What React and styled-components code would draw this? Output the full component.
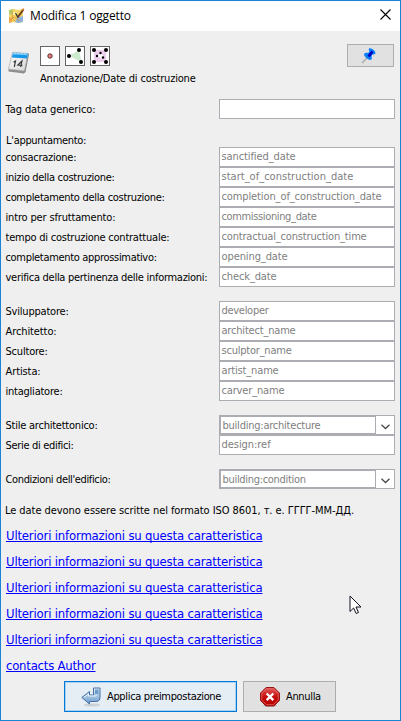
import React from 'react';
import styled, { createGlobalStyle, css } from 'styled-components';

const Global = createGlobalStyle`
  html, body { margin: 0; padding: 0; overflow: hidden; }
  *, *::before, *::after { box-sizing: border-box; }
`;

const controlFont = css`
  font-family: "DejaVu Sans Condensed", "Liberation Sans", sans-serif;
  font-size: 11px;
`;

const Dialog = styled.div`
  ${controlFont}
  position: relative;
  display: flex;
  flex-direction: column;
  width: 401px;
  height: 721px;
  border: 1px solid #1883d7;
  background: #efefef;
  color: #000;
  white-space: nowrap;
`;

const TitleBar = styled.header`
  display: flex;
  align-items: center;
  height: 30px;
  flex: none;
  padding: 0 9px 0 7px;
  background: #fff;
`;

const Title = styled.h1`
  flex: 1;
  margin: 0 0 0 5px;
  font: 400 12px/16px "Open Sans", "Noto Sans", sans-serif;
  letter-spacing: -0.16px;
`;

const CloseButton = styled.button`
  display: flex;
  padding: 0;
  margin-bottom: 3px;
  border: 0;
  background: none;
`;

const Toolbar = styled.div`
  display: flex;
  height: 68px;
  flex: none;
  padding: 13px 6px 0 7px;
`;

const PresetIcon = styled.div`
  display: flex;
  width: 32px;
  padding-top: 6px;
`;

const PresetInfo = styled.div`
  flex: 1;
`;

const TypeIcons = styled.div`
  display: flex;
  gap: 5px;
  padding-top: 2px;
  margin-bottom: 4px;

  svg { display: block; }
`;

const Caption = styled.div`
  line-height: 18px;
  letter-spacing: -0.18px;
`;

const PinButton = styled.button`
  display: flex;
  align-items: flex-start;
  justify-content: center;
  width: 47px;
  height: 23px;
  padding: 2px 3px 0 0;
  border: 1px solid #adadad;
  background: #e1e1e1;
`;

const Group = styled.section`
  display: flex;
  flex-direction: column;
  margin-bottom: ${(p) => p.$after}px;
`;

const Heading = styled.div`
  height: 14px;
  padding-left: 5px;
  line-height: 16px;
  letter-spacing: -0.3px;
`;

const Row = styled.div`
  display: grid;
  grid-template-columns: 213.500px 176px;
  grid-template-rows: 20px;
  height: 20px;
  padding-left: 4.500px;
`;

const Label = styled.label`
  line-height: 22px;
  letter-spacing: ${(p) => p.$track}px;
`;

const TextField = styled.div`
  height: 20px;
  padding-left: 1.500px;
  border: 1px solid #abadb3;
  background: #fff;
  color: #808080;
  line-height: 18px;
  letter-spacing: ${(p) => p.$track}px;
`;

const Combo = styled.div`
  display: flex;
  height: 20px;
  border: 1px solid #abadb3;
  background: #fff;
`;

const ComboText = styled.div`
  width: 156px;
  padding-left: 1.500px;
  border: 1px solid #abadb3;
  color: #808080;
  line-height: 17px;
  letter-spacing: ${(p) => p.$track}px;
`;

const ComboArrow = styled.div`
  display: flex;
  flex: 1;
  align-items: center;
  justify-content: center;
  padding-top: 4px;
`;

const Note = styled.p`
  height: 16px;
  margin: 0 0 4px;
  padding-left: 4px;
  line-height: 18px;
  letter-spacing: -0.06px;
`;

const Links = styled.nav`
  display: flex;
  flex-direction: column;
  align-items: flex-start;
  padding-left: 5px;
`;

const Link = styled.a`
  height: 26px;
  color: #0000ff;
  font-size: 13px;
  line-height: 28px;
  letter-spacing: ${(p) => p.$track}px;
  text-decoration: underline;
  text-decoration-thickness: 1px;
  text-underline-offset: 1px;
  text-decoration-skip-ink: none;
`;

const Actions = styled.footer`
  display: flex;
  gap: 6px;
  margin-top: auto;
  padding: 0 0 8px 63px;
`;

const ActionButton = styled.button`
  ${controlFont}
  display: flex;
  align-items: center;
  width: ${(p) => p.$width}px;
  height: 31px;
  padding: 0 0 0 16px;
  gap: 6px;
  border: 1px solid #adadad;
  background: #e1e1e1;
  color: #000;
  letter-spacing: -0.34px;
  white-space: nowrap;
  ${(p) => p.$primary && css`
    border-color: #0078d7;
    background: #e5edf5;
    box-shadow: inset 0 0 0 1px #a9d1f2;
  `}
`;

const Pointer = styled.svg`
  position: absolute;
  left: 348px;
  top: 594px;
`;

const AppIcon = () => (
  <svg width="17" height="17" viewBox="0 0 17 17">
    <path d="M1 2L6 1l4 1 5-1v13l-5 1-4-1-5 1z" fill="#f3d465" />
    <path d="M1 2l4-1 0 4-2 2-2-1z" fill="#b5cf6a" />
    <path d="M9 10l6-2v6l-5 1-3-1z" fill="#8fb3dc" />
    <path d="M1 9l3 2v3l-3 1z" fill="#f0a848" />
    <path d="M3 3l2 3-1 4 3 3M2 12l4-3 6 4" fill="none" stroke="#dd8b36" strokeWidth=".8" />
    <path d="M5 4h4v3H5z" fill="#fff09a" />
    <path d="M15.500 1.500L9.500 9.500" stroke="#6b3a20" strokeWidth="1.800" />
    <path d="M7.500 5l2.500 4.500" stroke="#333" strokeWidth="1.300" />
    <path d="M14 2l2-1" stroke="#e07a2c" strokeWidth="1.500" />
  </svg>
);

const CloseIcon = () => (
  <svg width="11" height="11" viewBox="0 0 11 11">
    <path d="M.5.5l10 10M10.500.5l-10 10" stroke="#000" strokeWidth="1.100" />
  </svg>
);

const CalendarIcon = () => (
  <svg width="22" height="24" viewBox="0 0 22 24">
    <defs>
      <linearGradient id="page" x1="0" y1="0" x2="1" y2="1">
        <stop offset="0" stopColor="#fff" />
        <stop offset="1" stopColor="#d4d4d4" />
      </linearGradient>
    </defs>
    <path d="M19 3l2 1-3.500 18-2 1.500z" fill="#777" />
    <path d="M.5 19l16 1-.5 3.500L.5 21.500z" fill="#8d8d8d" />
    <path d="M4.500 2.500L20 3.500 16.500 21 .5 19z" fill="url(#page)" stroke="#aaa" strokeWidth=".7" />
    <path d="M5 2.500l15 .7-1 5.300L3.900 7.500z" fill="#1597e8" />
    <path d="M5 2.500l15 .7-.4 2L4.500 4.500z" fill="#70c6f6" />
    <path d="M7 1v3M10 1v3M13.500 1.300v3M17 1.500v3" stroke="#ddd" />
    <path d="M5.500 12l2-1-1.200 6M12.700 17l1.200-6-4 4 4.500.4" fill="none" stroke="#333" strokeWidth="1.200" />
  </svg>
);

const Frame = () => <rect x=".5" y=".5" width="19" height="19" fill="#fff" stroke="#666" />;

const NodeIcon = () => (
  <svg width="20" height="20" viewBox="0 0 20 20">
    <Frame />
    <circle cx="10" cy="10" r="2.200" fill="#e98080" stroke="#5b3030" />
  </svg>
);

const ClosedWayIcon = () => (
  <svg width="20" height="20" viewBox="0 0 20 20">
    <Frame />
    <path d="M4 10L14 4l2.500 12z" fill="#ccebcc" />
    <circle cx="4" cy="10" r="2" />
    <circle cx="14" cy="4" r="2" />
    <circle cx="16" cy="16" r="2" />
  </svg>
);

const RelationIcon = () => (
  <svg width="20" height="20" viewBox="0 0 20 20">
    <Frame />
    <path d="M4 4h12v12H4z" fill="#edcfec" />
    <path d="M7 10l4-3 3 4-2 2z" fill="#fff" />
    <circle cx="4" cy="4" r="2" />
    <circle cx="16" cy="4" r="2" />
    <circle cx="4" cy="16" r="2" />
    <circle cx="16" cy="16" r="2" />
    <circle cx="10.500" cy="7" r="1.200" />
    <circle cx="7" cy="10" r="1.200" />
    <circle cx="13" cy="11.500" r="1.200" />
  </svg>
);

const PinIcon = () => (
  <svg width="16" height="17" viewBox="0 0 16 17">
    <path d="M1 16l6-6" stroke="#aaa" strokeWidth="1.500" />
    <path d="M8 1.500c2-1.500 7 2.500 6.500 5-.5 1.200-2 .7-3 1l-1 1.500c.7 2 .3 4-1 4C7 13 3 9.500 3 7.500 3 6 5.500 5.500 7 6l1.500-1.500C8 3.500 7.300 2.500 8 1.500z" fill="#0a80fa" />
    <path d="M10.500 3.500l2 2-4 5-2-2z" fill="#0000c4" />
  </svg>
);

const ChevronIcon = () => (
  <svg width="9" height="6" viewBox="0 0 9 6">
    <path d="M.5.8l4 3.700 4-3.700" fill="none" stroke="#484848" strokeWidth="1.300" />
  </svg>
);

const ApplyIcon = () => (
  <svg width="20" height="20" viewBox="0 0 20 20">
    <defs>
      <linearGradient id="arrow" x1="0" y1="0" x2="0" y2="1">
        <stop offset="0" stopColor="#e2effa" />
        <stop offset="1" stopColor="#6798ca" />
      </linearGradient>
    </defs>
    <ellipse cx="11" cy="18" rx="8" ry="1.600" fill="#cbd1d7" />
    <path d="M12.500 1h6.500v9.500c0 2.500-1.500 4-4 4H8.500V17L.8 10.500l7.700-6V8h4z" fill="url(#arrow)" stroke="#4470a3" />
    <path d="M14 2.500h3.500V7H14z" fill="#6e9cca" />
    <path d="M2.800 10.500L7.500 7v2H14c1 0 1.500-.5 1.500-1.500" fill="none" stroke="#eef6fc" />
  </svg>
);

const CancelIcon = () => (
  <svg width="20" height="20" viewBox="0 0 20 20">
    <defs>
      <linearGradient id="stop" x1="0" y1="0" x2="0" y2="1">
        <stop offset="0" stopColor="#e35f5f" />
        <stop offset=".5" stopColor="#c60d0d" />
        <stop offset="1" stopColor="#b40000" />
      </linearGradient>
    </defs>
    <ellipse cx="10" cy="18.800" rx="7" ry="1" fill="#b9b9b9" />
    <path d="M6 .6h8l5.400 5.400v7.500L14 18.900H6L.6 13.500V6z" fill="url(#stop)" stroke="#8f0909" />
    <path d="M6.500 1.800h7L18.200 6.400v6.800L13.500 17.700h-7L1.800 13.200V6.400z" fill="none" stroke="#e77" strokeWidth=".7" />
    <path d="M6.700 6.500l6.600 6.600M13.300 6.500l-6.600 6.600" stroke="#fff" strokeWidth="2.400" />
  </svg>
);

const groups = [
  { after: 14, rows: [{ label: 'Tag data generico:', lt: -0.08, value: '', vt: 0 }] },
  {
    after: 14,
    heading: "L'appuntamento:",
    rows: [
      { label: 'consacrazione:', lt: -0.25, value: 'sanctified_date', vt: -0.1 },
      { label: 'inizio della costruzione:', lt: -0.3, value: 'start_of_construction_date', vt: 0.02 },
      { label: 'completamento della costruzione:', lt: -0.31, value: 'completion_of_construction_date', vt: -0.11 },
      { label: 'intro per sfruttamento:', lt: -0.16, value: 'commissioning_date', vt: -0.36 },
      { label: 'tempo di costruzione contrattuale:', lt: -0.23, value: 'contractual_construction_time', vt: -0.17 },
      { label: 'completamento approssimativo:', lt: -0.32, value: 'opening_date', vt: -0.1 },
      { label: 'verifica della pertinenza delle informazioni:', lt: -0.28, value: 'check_date', vt: -0.12 },
    ],
  },
  {
    after: 14,
    rows: [
      { label: 'Sviluppatore:', lt: -0.2, value: 'developer', vt: -0.29 },
      { label: 'Architetto:', lt: -0.1, value: 'architect_name', vt: -0.19 },
      { label: 'Scultore:', lt: -0.2, value: 'sculptor_name', vt: -0.22 },
      { label: 'Artista:', lt: -0.1, value: 'artist_name', vt: -0.16 },
      { label: 'intagliatore:', lt: -0.23, value: 'carver_name', vt: -0.15 },
    ],
  },
  {
    after: 14,
    rows: [
      { label: 'Stile architettonico:', lt: -0.23, value: 'building:architecture', vt: -0.23, combo: true },
      { label: 'Serie di edifici:', lt: -0.32, value: 'design:ref', vt: -0.05 },
    ],
  },
  {
    after: 13,
    rows: [{ label: "Condizioni dell'edificio:", lt: -0.36, value: 'building:condition', vt: -0.31, combo: true }],
  },
];

const links = [
  ...Array(5).fill({ text: 'Ulteriori informazioni su questa caratteristica', track: -0.18 }),
  { text: 'contacts Author', track: -0.23 },
];

function FieldRow({ label, lt, value, vt, combo }) {
  return (
    <Row>
      <Label $track={lt}>{label}</Label>
      {combo ? (
        <Combo>
          <ComboText $track={vt}>{value}</ComboText>
          <ComboArrow><ChevronIcon /></ComboArrow>
        </Combo>
      ) : (
        <TextField $track={vt}>{value}</TextField>
      )}
    </Row>
  );
}

export default function App() {
  return (
    <Dialog>
      <Global />
      <TitleBar>
        <AppIcon />
        <Title>Modifica 1 oggetto</Title>
        <CloseButton aria-label="Chiudi"><CloseIcon /></CloseButton>
      </TitleBar>
      <Toolbar>
        <PresetIcon><CalendarIcon /></PresetIcon>
        <PresetInfo>
          <TypeIcons>
            <NodeIcon />
            <ClosedWayIcon />
            <RelationIcon />
          </TypeIcons>
          <Caption>Annotazione/Date di costruzione</Caption>
        </PresetInfo>
        <PinButton><PinIcon /></PinButton>
      </Toolbar>
      {groups.map((group, i) => (
        <Group key={i} $after={group.after}>
          {group.heading && <Heading>{group.heading}</Heading>}
          {group.rows.map((row) => <FieldRow key={row.label} {...row} />)}
        </Group>
      ))}
      <Note>Le date devono essere scritte nel formato ISO 8601, т. е. ГГГГ-ММ-ДД.</Note>
      <Links>
        {links.map((link, i) => <Link key={i} $track={link.track}>{link.text}</Link>)}
      </Links>
      <Actions>
        <ActionButton $primary $width={173}><ApplyIcon />Applica preimpostazione</ActionButton>
        <ActionButton $width={93}><CancelIcon />Annulla</ActionButton>
      </Actions>
      <Pointer width="13" height="20" viewBox="0 0 13 20">
        <path d="M1 1v15.500l3.600-3.500 2.600 5.500 2.300-1L7 12h5z" fill="#fff" stroke="#101020" />
      </Pointer>
    </Dialog>
  );
}
